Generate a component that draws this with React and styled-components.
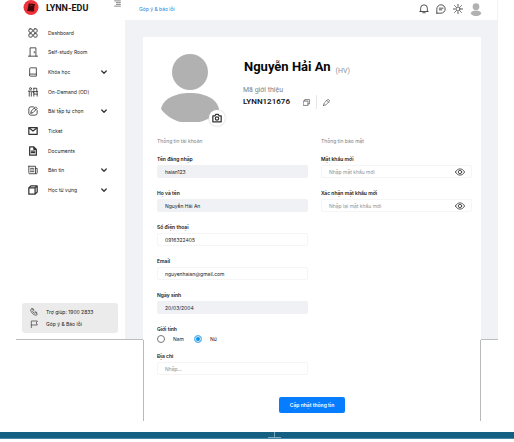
import React from 'react';
import styled, { createGlobalStyle, css } from 'styled-components';

const GlobalStyle = createGlobalStyle`
  *, *::before, *::after { box-sizing: border-box; }
  body { margin: 0; background: #fff; color: #222; font: 5px/8px Inter, Roboto, sans-serif; }
  button, input { font: inherit; color: inherit; }
  button { padding: 0; border: 0; background: none; cursor: pointer; }
  svg { display: block; flex: none; }
  a { color: inherit; text-decoration: none; }
  h1, h2, p, ul { margin: 0; padding: 0; }
`;

/* ---------- shell ---------- */
const Shell = styled.div`
  display: grid;
  grid-template-columns: 109px 18px minmax(0, 1fr) 17px;
  grid-template-rows: 20px auto 1fr;
  margin: 0 16px;
`;
const Backdrop = styled.div`
  grid-area: 2 / 2 / 3 / 5;
  background: #f0f2f5;
  border-bottom: 1px solid #bdbdbd;
`;
const LowerFrame = styled.div`
  grid-area: 3 / 3;
  border: solid #b9b9b9;
  border-width: 0 1px;
  pointer-events: none;
`;

/* ---------- sidebar ---------- */
const Sidebar = styled.aside`
  grid-area: 1 / 1 / 3 / 2;
  display: flex;
  flex-direction: column;
  border-bottom: 1px solid #bdbdbd;
`;
const Brand = styled.div`
  display: flex;
  align-items: flex-start;
  gap: 7px;
  height: 23px;
  padding: 0 4px 0 7px;
`;
const BrandName = styled.span`
  flex: 1;
  font: 700 9px/16px Roboto, sans-serif;
  color: #151515;
`;
const NavList = styled.ul`
  display: grid;
  grid-auto-rows: 1fr;
  height: 177px;
  list-style: none;
`;
const NavItem = styled.li`
  display: grid;
`;
const navRow = css`
  display: grid;
  grid-template-columns: 12px 1fr 6px;
  column-gap: 8px;
  align-items: center;
  padding: 0 18px 0 12px;
  text-align: left;
`;
const NavLink = styled.a`${navRow}`;
const NavButton = styled.button`${navRow}`;
const HelpBox = styled.div`
  display: grid;
  gap: 4px;
  margin: 103px 7px 6px 6px;
  padding: 5px 8px;
  border-radius: 3px;
  background: #ebebeb;
`;
const HelpLink = styled.a`
  display: flex;
  align-items: center;
  gap: 8px;
`;

/* ---------- top bar ---------- */
const TopBar = styled.header`
  grid-area: 1 / 2 / 2 / 5;
  display: flex;
  align-items: center;
  justify-content: space-between;
  padding: 0 15px 2px 14px;
  border-right: 1px solid #f3f3f3;
`;
const FeedbackLink = styled.a`
  color: #2385dc;
`;
const Actions = styled.div`
  display: flex;
  align-items: center;
  gap: 7px;
`;

/* ---------- profile card ---------- */
const Card = styled.main`
  grid-area: 2 / 3 / 4 / 4;
  margin-top: 17px;
  padding: 15px 9px 8px 14px;
  background: #fff;
`;
const Profile = styled.section`
  display: flex;
  gap: 24px;
  padding-left: 4px;
`;
const AvatarBox = styled.div`
  position: relative;
  padding-bottom: 15px;
`;
const CameraButton = styled.button`
  position: absolute;
  right: -6px;
  bottom: 11px;
  display: grid;
  place-items: center;
  width: 16px;
  height: 16px;
  border-radius: 50%;
  background: #fff;
  box-shadow: 0 0 2px #bbb;
`;
const Identity = styled.div`
  padding-top: 7px;
`;
const NameRow = styled.div`
  display: flex;
  align-items: baseline;
  gap: 5px;
  padding-left: 1px;
  color: #8b8f94;
  font: 7px/16px Roboto, sans-serif;
`;
const FullName = styled.h1`
  font: 700 13px/16px Roboto, sans-serif;
  color: #080808;
`;
const Role = styled.span`
  padding-top: 4px;
  align-self: center;
`;
const CodeLabel = styled.p`
  margin-top: 7px;
  font: 7px/8px Roboto, sans-serif;
  color: #808489;
`;
const CodeRow = styled.div`
  display: flex;
  align-items: center;
  gap: 6px;
  height: 14px;
  margin-top: 1px;
`;
const Code = styled.strong`
  margin-right: 7px;
  font: 600 8px/12px Roboto, sans-serif;
  color: #151515;
`;
const Divider = styled.span`
  align-self: stretch;
  border-left: 1px solid #e6e6e6;
`;
const Form = styled.form`
  display: grid;
  grid-template-columns: 1fr 1fr;
  column-gap: 13px;
`;
const Column = styled.fieldset`
  display: grid;
  align-content: start;
  gap: 11px;
  min-width: 0;
  margin: 0;
  padding: 0;
  border: 0;
`;
const ColumnTitle = styled.legend`
  padding: 0;
  margin-bottom: 10px;
  color: #7b8086;
`;
const Field = styled.div`
  display: grid;
  gap: 2px;
`;
const Label = styled.label`
  font-weight: 600;
  color: #161616;
`;
const InputBox = styled.div`
  display: flex;
  align-items: center;
  height: 13px;
  padding: 0 6px 0 7px;
  border: 1px solid ${(p) => (p.$filled ? '#f0f1f4' : '#f5f5f5')};
  border-radius: 2px;
  background: ${(p) => (p.$filled ? '#f0f1f4' : '#fff')};
`;
const Input = styled.input`
  flex: 1;
  min-width: 0;
  padding: 0;
  border: 0;
  outline: 0;
  background: transparent;
  &::placeholder { color: #8d9196; opacity: 1; }
`;
const RadioGroup = styled.div`
  display: flex;
  gap: 10px;
  margin-bottom: -2px;
`;
const RadioLabel = styled.label`
  display: flex;
  align-items: center;
  gap: 8px;
`;
const Radio = styled.input`
  appearance: none;
  width: 8px;
  height: 8px;
  margin: 0;
  border: 1px solid #777;
  border-radius: 50%;
  &:checked {
    border-color: #63b5ee;
    background: #0d94eb;
    box-shadow: inset 0 0 0 1px #d8effc;
  }
`;
const Submit = styled.button`
  grid-column: 1 / -1;
  justify-self: center;
  margin-top: 22px;
  margin-right: 5px;
  padding: 4px 11px;
  border-radius: 2px;
  background: #067cff;
  color: #fff;
  font-weight: 600;
`;

/* ---------- bottom strip ---------- */
const Strip = styled.footer`
  display: grid;
  justify-items: center;
  height: 7px;
  margin-top: 11px;
  border-bottom: 1px solid #4a87a5;
  background: #155f82;
`;
const StripMark = styled.span`
  width: 13px;
  margin-left: 34px;
  border-bottom: 1px solid #7fa9bd;
  background: linear-gradient(#7fa9bd, #7fa9bd) center / 1px 100% no-repeat;
`;

/* ---------- icons ---------- */
const drawings = {
  grid: <><rect x="2" y="2" width="8.5" height="8.5" rx="3" /><rect x="13.5" y="2" width="8.5" height="8.5" rx="3" /><rect x="2" y="13.5" width="8.5" height="8.5" rx="3" /><rect x="13.5" y="13.5" width="8.5" height="8.5" rx="3" /></>,
  door: <><path d="M5 22V2h14v20M1 22h22" /><path d="M15 11v3" /></>,
  book: <><path d="M4 19V4a2 2 0 0 1 2-2h14v20H6a2.5 2.5 0 0 1 0-5h14" /></>,
  desk: <><circle cx="6" cy="4" r="2.5" /><path d="M1 10h8l5 4M3 10v12M8 12v10M12 11h11M14 11v11M22 11v11M14 17h8" /><path d="M14 3h7v8M14 3v5" /></>,
  edit: <><path d="M13 2H7a5 5 0 0 0-5 5v10a5 5 0 0 0 5 5h10a5 5 0 0 0 5-5v-6" /><path d="m7 17 1-5L18 2l4 4-10 10-5 1ZM15 5l4 4" /></>,
  mail: <><path d="M2 4h20v16H2z" /><path d="m3 5 9 7 9-7" /></>,
  doc: <><path d="M14 2H4v20h16V8l-6-6v6h6M8 12h8M8 16h8" /></>,
  news: <><path d="M2 3h16v18H4a2 2 0 0 1-2-2V3ZM18 8h4v11a2 2 0 0 1-4 0" /><path d="M6 8h8M6 16h8M6 12h2M11 12h3" /></>,
  cube: <><path d="M2 7h15v15H2zM2 7l5-5h15l-5 5M22 2v15l-5 5" /></>,
  phone: <><path d="M6 2 2 5c0 8 9 17 17 17l3-4-5-4-4 2-5-5 2-4-4-5Z" /><path d="m9 2 3 4M15 11a5 5 0 0 1 6 4" /></>,
  flag: <path d="M4 23V3h18l-3 6 3 6H4" />,
  chevron: <path d="m3 8 9 9 9-9" />,
  menu: <path d="M2 3h20M8 9h14M8 15h14M2 21h20" />,
  bell: <><path d="M4 18V10a8 8 0 0 1 16 0v8M2 18h20M9 21h6" /></>,
  chat: <><path d="M2 22V12a10 10 0 1 1 10 10H2ZM8 10h9M8 14h6" /></>,
  sun: <><circle cx="12" cy="12" r="5" /><path d="M12 1v3M12 20v3M1 12h3M20 12h3M4 4l2 2M18 18l2 2M4 20l2-2M18 6l2-2" /></>,
  camera: <><path d="M2 7h5l2-4h6l2 4h5v14H2z" /><circle cx="12" cy="13" r="4" /></>,
  copy: <><path d="M2 7h15v15H2zM6 7V2h16v15h-5" /></>,
  pencil: <><path d="m2 22 2-8L15 3a3 3 0 0 1 5 0l1 1a3 3 0 0 1 0 5L10 20l-8 2ZM13 5l6 6" /></>,
  eye: <><path d="M1 12c5-10 17-10 22 0-5 10-17 10-22 0Z" /><circle cx="12" cy="12" r="4" /></>,
};
const strokeWidths = { mail: 3, doc: 3, cube: 3, chevron: 5, camera: 3 };
const Icon = ({ name, size = 10, color = '#333' }) => (
  <svg width={size} height={size} viewBox="0 0 24 24" fill="none" stroke={color} strokeWidth={strokeWidths[name] || 2} strokeLinecap="round" strokeLinejoin="round" aria-hidden="true">
    {drawings[name]}
  </svg>
);
const Person = ({ width, height }) => (
  <svg width={width} height={height} viewBox="0 0 58 70" fill="#b1b1b1" aria-hidden="true">
    <circle cx="29" cy="20" r="18" />
    <path d="M0 57C2 47 14 41 29 41s27 6 29 16c-6 9-16 14-29 14S7 66 0 57Z" />
  </svg>
);
const Logo = () => (
  <svg width="16" height="16" viewBox="0 0 16 16" aria-hidden="true">
    <circle cx="8" cy="7.5" r="7.5" fill="#ef3139" />
    <path d="m5.7 3.5 6.2.4-1.2 6.6-6.2-.6Z" fill="#3d080b" />
    <path d="m4.2 10.4 6.2.7.5-1.2" fill="none" stroke="#260406" strokeWidth="1" />
    <path d="m6.8 5.2 3 .3" stroke="#a73238" strokeWidth=".6" />
  </svg>
);

/* ---------- data ---------- */
const navigation = [
  ['grid', 'Dashboard'],
  ['door', 'Self-study Room'],
  ['book', 'Khóa học', true],
  ['desk', 'On-Demand (OD)'],
  ['edit', 'Bài tập tự chọn', true],
  ['mail', 'Ticket'],
  ['doc', 'Documents'],
  ['news', 'Bản tin', true],
  ['cube', 'Học từ vựng', true],
];

function TextField({ id, label, filled, password, ...rest }) {
  return (
    <Field>
      <Label htmlFor={id}>{label}</Label>
      <InputBox $filled={filled}>
        <Input id={id} type={password ? 'password' : 'text'} readOnly={filled} {...rest} />
        {password && (
          <button type="button" aria-label="Hiện mật khẩu"><Icon name="eye" /></button>
        )}
      </InputBox>
    </Field>
  );
}

export default function App() {
  return (
    <>
      <GlobalStyle />
      <Shell>
        <Sidebar>
          <Brand>
            <Logo />
            <BrandName>LYNN-EDU</BrandName>
            <button type="button" aria-label="Menu"><Icon name="menu" size={7} /></button>
          </Brand>
          <nav>
            <NavList>
              {navigation.map(([icon, text, expandable]) => (
                <NavItem key={text}>
                  {expandable ? (
                    <NavButton type="button">
                      <Icon name={icon} /><span>{text}</span>
                      <Icon name="chevron" size={6} />
                    </NavButton>
                  ) : (
                    <NavLink href="#"><Icon name={icon} /><span>{text}</span></NavLink>
                  )}
                </NavItem>
              ))}
            </NavList>
          </nav>
          <HelpBox>
            <HelpLink href="tel:19002833"><Icon name="phone" size={8} />Trợ giúp: 1900 2833</HelpLink>
            <HelpLink href="#"><Icon name="flag" size={8} />Góp ý &amp; Báo lỗi</HelpLink>
          </HelpBox>
        </Sidebar>
        <TopBar>
          <FeedbackLink href="#">Góp ý &amp; báo lỗi</FeedbackLink>
          <Actions>
            <button type="button" aria-label="Thông báo"><Icon name="bell" /></button>
            <button type="button" aria-label="Tin nhắn"><Icon name="chat" /></button>
            <button type="button" aria-label="Giao diện"><Icon name="sun" /></button>
            <button type="button" aria-label="Tài khoản"><Person width={12} height={13} /></button>
          </Actions>
        </TopBar>
        <Backdrop />
        <Card>
          <Profile>
            <AvatarBox>
              <Person width={58} height={70} />
              <CameraButton type="button" aria-label="Đổi ảnh"><Icon name="camera" /></CameraButton>
            </AvatarBox>
            <Identity>
              <NameRow><FullName>Nguyễn Hải An</FullName><Role>(HV)</Role></NameRow>
              <CodeLabel>Mã giới thiệu</CodeLabel>
              <CodeRow>
                <Code>LYNN121676</Code>
                <button type="button" aria-label="Sao chép"><Icon name="copy" size={7} /></button>
                <Divider />
                <button type="button" aria-label="Chỉnh sửa"><Icon name="pencil" size={7} /></button>
              </CodeRow>
            </Identity>
          </Profile>
          <Form onSubmit={(e) => e.preventDefault()}>
            <Column>
              <ColumnTitle>Thông tin tài khoản</ColumnTitle>
              <TextField id="username" label="Tên đăng nhập" filled defaultValue="haian123" />
              <TextField id="fullname" label="Họ và tên" filled defaultValue="Nguyễn Hải An" />
              <TextField id="phone" label="Số điện thoại" defaultValue="0916322405" />
              <TextField id="email" label="Email" defaultValue="nguyenhaian@gmail.com" />
              <TextField id="birthday" label="Ngày sinh" filled defaultValue="20/03/2004" />
              <Field role="radiogroup" aria-labelledby="gender">
                <Label as="span" id="gender">Giới tính</Label>
                <RadioGroup>
                  <RadioLabel><Radio type="radio" name="gender" />Nam</RadioLabel>
                  <RadioLabel><Radio type="radio" name="gender" defaultChecked />Nữ</RadioLabel>
                </RadioGroup>
              </Field>
              <TextField id="address" label="Địa chỉ" placeholder="Nhập..." />
            </Column>
            <Column>
              <ColumnTitle>Thông tin bảo mật</ColumnTitle>
              <TextField id="password" label="Mật khẩu mới" password placeholder="Nhập mật khẩu mới" />
              <TextField id="confirm" label="Xác nhận mật khẩu mới" password placeholder="Nhập lại mật khẩu mới" />
            </Column>
            <Submit type="submit">Cập nhật thông tin</Submit>
          </Form>
        </Card>
        <LowerFrame />
      </Shell>
      <Strip><StripMark /></Strip>
    </>
  );
}
